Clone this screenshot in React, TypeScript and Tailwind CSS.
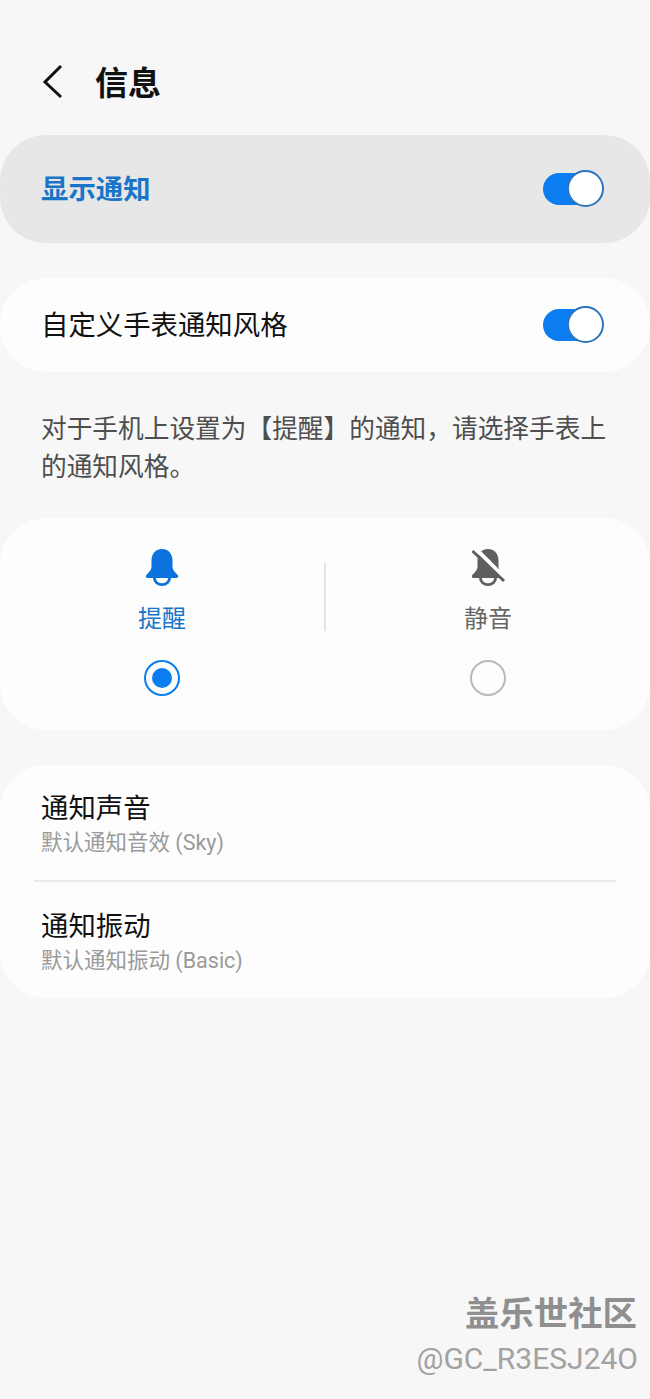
const cjk = "font-['Roboto','Noto_Sans_CJK_SC',sans-serif]";

function Toggle() {
  return (
    <div className="relative h-[32px] w-[61px]">
      <div className="absolute left-0 top-0 h-[32px] w-[50px] rounded-full bg-[#0b7df0]" />
      <div className="absolute right-0 top-[-3px] size-[37px] rounded-full border-2 border-[#2f75bd] bg-white" />
    </div>
  );
}

function Bell({ muted }: { muted?: boolean }) {
  const color = muted ? '#5f5f5f' : '#0b72de';
  return (
    <svg width="36" height="38" viewBox="0 0 36 38">
      <path
        d="M18 1C11 1 7.5 6.5 7.5 12.5V18C7.5 22 5 24.5 2.3 27C1.3 28.2 2 30 3.6 30H32.4C34 30 34.7 28.2 33.7 27C31 24.5 28.5 22 28.5 18V12.5C28.5 6.5 25 1 18 1Z"
        fill={color}
      />
      <path d="M9 30A9 8 0 0 0 27 30H24.2A6.2 5.2 0 0 1 11.8 30Z" fill={color} />
      {muted && (
        <>
          <path d="M5.5 0.5L35.5 30.5" stroke="#fdfdfd" strokeWidth="4" />
          <path d="M2.5 3L34 33" stroke={color} strokeWidth="3" />
        </>
      )}
    </svg>
  );
}

function ListRow({ title, sub, top }: { title: string; sub: string; top: string }) {
  return (
    <div className={`flex flex-col px-[41px] ${top}`}>
      <div className="text-[27.4px] leading-[38px] text-[#111]">{title}</div>
      <div className="text-[21.5px] leading-[30px] text-[#9a9a9a]">{sub}</div>
    </div>
  );
}

export default function App() {
  return (
    <div className={`relative flex h-[1399px] w-[650px] flex-col overflow-hidden bg-[#f7f7f7] ${cjk}`}>
      <div className="flex h-[135px] items-start pl-[41px] pt-[62px]">
        <svg width="24" height="38" viewBox="0 0 24 38" fill="none" className="mt-[1px]">
          <path d="M20 3L4 19L20 34" stroke="#111" strokeWidth="3" />
        </svg>
        <h1 className="ml-[30px] mt-[2px] text-[33px] font-bold leading-[40px] text-[#111]">信息</h1>
      </div>

      <div className="flex h-[108px] items-center justify-between rounded-[46px] bg-[#e7e7e7] pl-[41px] pr-[46px]">
        <span className="mt-[4px] text-[27.4px] font-bold text-[#1a75c9]">显示通知</span>
        <Toggle />
      </div>

      <div className="mt-[35px] flex h-[94px] items-center justify-between rounded-[46px] bg-[#fdfdfd] pl-[41px] pr-[46px]">
        <span className="mt-[4px] text-[27.4px] text-[#111]">自定义手表通知风格</span>
        <Toggle />
      </div>

      <p className="mb-[32px] mt-[38px] px-[41px] text-[25.7px] leading-[38px] text-[#4e4e4e]">
        对于手机上设置为【提醒】的通知，请选择手表上的通知风格。
      </p>

      <div className="flex h-[212px] items-start rounded-[46px] bg-[#fdfdfd]">
        <div className="flex flex-1 flex-col items-center pt-[30px]">
          <Bell />
          <span className="mt-[15px] text-[24px] leading-[36px] text-[#1a75c9]">提醒</span>
          <div className="mt-[23px] flex size-[36px] items-center justify-center rounded-full border-2 border-[#0b7df0]">
            <div className="size-[20px] rounded-full bg-[#0b7df0]" />
          </div>
        </div>
        <div className="mt-[45px] h-[68px] w-[2px] bg-[#e4e4e4]" />
        <div className="flex flex-1 flex-col items-center pt-[30px]">
          <Bell muted />
          <span className="mt-[15px] text-[24px] leading-[36px] text-[#666]">静音</span>
          <div className="mt-[23px] size-[36px] rounded-full border-2 border-[#b9b9b9]" />
        </div>
      </div>

      <div className="mt-[35px] h-[233px] rounded-[46px] bg-[#fdfdfd]">
        <div className="h-[115px]">
          <ListRow title="通知声音" sub="默认通知音效 (Sky)" top="pt-[25px]" />
        </div>
        <div className="mx-[34px] h-[2px] bg-[#e9e9e9]" />
        <ListRow title="通知振动" sub="默认通知振动 (Basic)" top="pt-[26px]" />
      </div>

      <div className="absolute bottom-[18px] right-[12px] flex flex-col items-end">
        <span className="mr-[1px] text-[34.4px] font-bold leading-[46px] text-[#8f8f8f]">盖乐世社区</span>
        <span className="text-[30px] leading-[44px] text-[#a2a2a2]">@GC_R3ESJ24O</span>
      </div>
    </div>
  );
}
